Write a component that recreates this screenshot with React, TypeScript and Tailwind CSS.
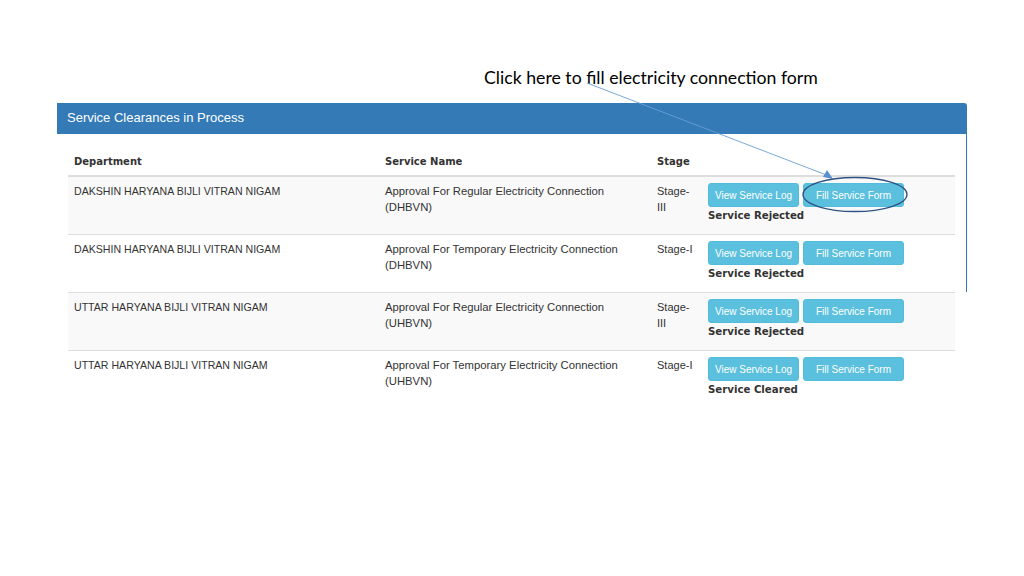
import React from "react";

interface IRow {
  department: string;
  service: string;
  agency: string;
  stage: string;
  status: string;
}

const rows: IRow[] = [
  {
    department: "DAKSHIN HARYANA BIJLI VITRAN NIGAM",
    service: "Approval For Regular Electricity Connection",
    agency: "(DHBVN)",
    stage: "Stage-III",
    status: "Service Rejected",
  },
  {
    department: "DAKSHIN HARYANA BIJLI VITRAN NIGAM",
    service: "Approval For Temporary Electricity Connection",
    agency: "(DHBVN)",
    stage: "Stage-I",
    status: "Service Rejected",
  },
  {
    department: "UTTAR HARYANA BIJLI VITRAN NIGAM",
    service: "Approval For Regular Electricity Connection",
    agency: "(UHBVN)",
    stage: "Stage-III",
    status: "Service Rejected",
  },
  {
    department: "UTTAR HARYANA BIJLI VITRAN NIGAM",
    service: "Approval For Temporary Electricity Connection",
    agency: "(UHBVN)",
    stage: "Stage-I",
    status: "Service Cleared",
  },
];

const sans = "font-['Liberation_Sans',Arial,sans-serif]";
const bold = "font-['DejaVu_Sans',Verdana,sans-serif] font-bold";

const App = () => {
  return (
    <div className="relative w-[1024px] h-[576px] bg-white overflow-hidden">
      {/* slide caption */}
      <div className="pt-[66px] pl-[484px] h-[103px]">
        <p className="font-['Lato','Open_Sans',sans-serif] text-[17.7px] leading-[24px] text-black whitespace-nowrap">
          Click here to fill electricity connection form
        </p>
      </div>

      {/* panel */}
      <div className={`ml-[57px] w-[910px] ${sans}`}>
        <div className="h-[31px] bg-[#337ab7] rounded-tr-[3px] px-[10px] pb-[1px] flex items-center text-white text-[13px]">
          Service Clearances in Process
        </div>
        <div className="flex items-start">
          <div className="flex-1 pl-[11px] pr-[11px] pt-[14px]">
            <div className={`flex h-[29px] items-center border-b-2 border-[#dddddd] text-[10px] text-[#333] ${bold}`}>
              <div className="w-[311px] px-[6px]">Department</div>
              <div className="w-[272px] px-[6px]">Service Name</div>
              <div className="w-[51px] px-[6px]">Stage</div>
              <div className="flex-1" />
            </div>
            {rows.map((row, i) => (
              <div
                key={i}
                className={`flex h-[58px] border-b border-[#dddddd] text-[#333] ${i % 2 === 0 ? "bg-[#f9f9f9]" : "bg-white"} ${i === rows.length - 1 ? "border-b-0" : ""}`}
              >
                <div className="w-[311px] px-[6px] pt-[6px] text-[10.6px] leading-[16px]">{row.department}</div>
                <div className="w-[272px] px-[6px] pt-[6px] text-[11.3px] leading-[16px]">
                  {row.service}
                  <br />
                  {row.agency}
                </div>
                <div className="w-[51px] pl-[6px] pr-[7px] pt-[6px] text-[11px] leading-[16px] break-words">{row.stage}</div>
                <div className="flex-1 pl-[6px] pt-[6px]">
                  <div className="flex gap-[4px]">
                    <button className="w-[91px] h-[24px] bg-[#5bc0de] border border-[#52bcdc] rounded-[3px] text-white text-[10px]">
                      View Service Log
                    </button>
                    <button className="w-[101px] h-[24px] bg-[#5bc0de] border border-[#52bcdc] rounded-[3px] text-white text-[10px]">
                      Fill Service Form
                    </button>
                  </div>
                  <div className={`text-[10.2px] leading-[16px] mt-[1px] text-[#333] ${bold}`}>{row.status}</div>
                </div>
              </div>
            ))}
          </div>
          <div className="w-px h-[158px] bg-[#337ab7]" />
        </div>
      </div>

      {/* annotation arrow + highlight */}
      <svg className="absolute left-0 top-0 pointer-events-none" width="1024" height="576">
        <line x1="587" y1="83" x2="829" y2="176" stroke="#6a9fd4" strokeWidth="0.9" />
        <polygon points="833,179 823,177 827,170" fill="#5b8fcf" />
        <ellipse cx="855" cy="194.5" rx="52" ry="17" fill="none" stroke="#2f5383" strokeWidth="1.3" />
      </svg>
    </div>
  );
};

export default App;
